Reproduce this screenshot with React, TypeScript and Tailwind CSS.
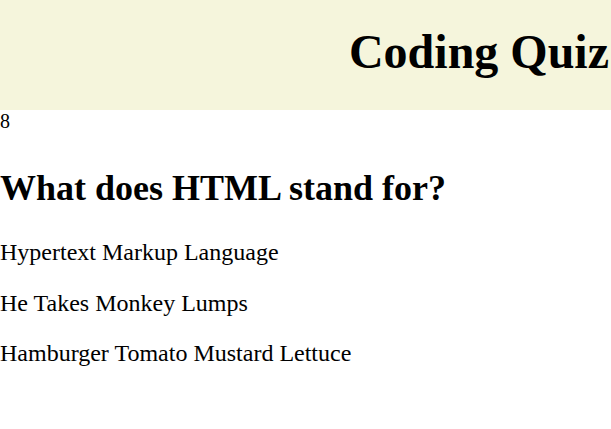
import React from "react";

export default function App() {
  const serif = { fontFamily: '"Liberation Serif", "Times New Roman", serif' };
  return (
    <div className="min-h-screen bg-white text-black" style={serif}>
      <header className="h-[110px] bg-[#f5f5dc] pt-[24px] pr-[2px]">
        <h1 className="text-right text-[48px] font-bold leading-[55px]">Coding Quiz</h1>
      </header>
      <div className="text-[20px] leading-[23px]">8</div>
      <h2 className="mt-[35px] text-[36px] font-bold leading-[41px]">What does HTML stand for?</h2>
      <div className="mt-[30px] flex flex-col gap-[23.5px] text-[24px] leading-[27px]">
        <p>Hypertext Markup Language</p>
        <p>He Takes Monkey Lumps</p>
        <p>Hamburger Tomato Mustard Lettuce</p>
      </div>
    </div>
  );
}
